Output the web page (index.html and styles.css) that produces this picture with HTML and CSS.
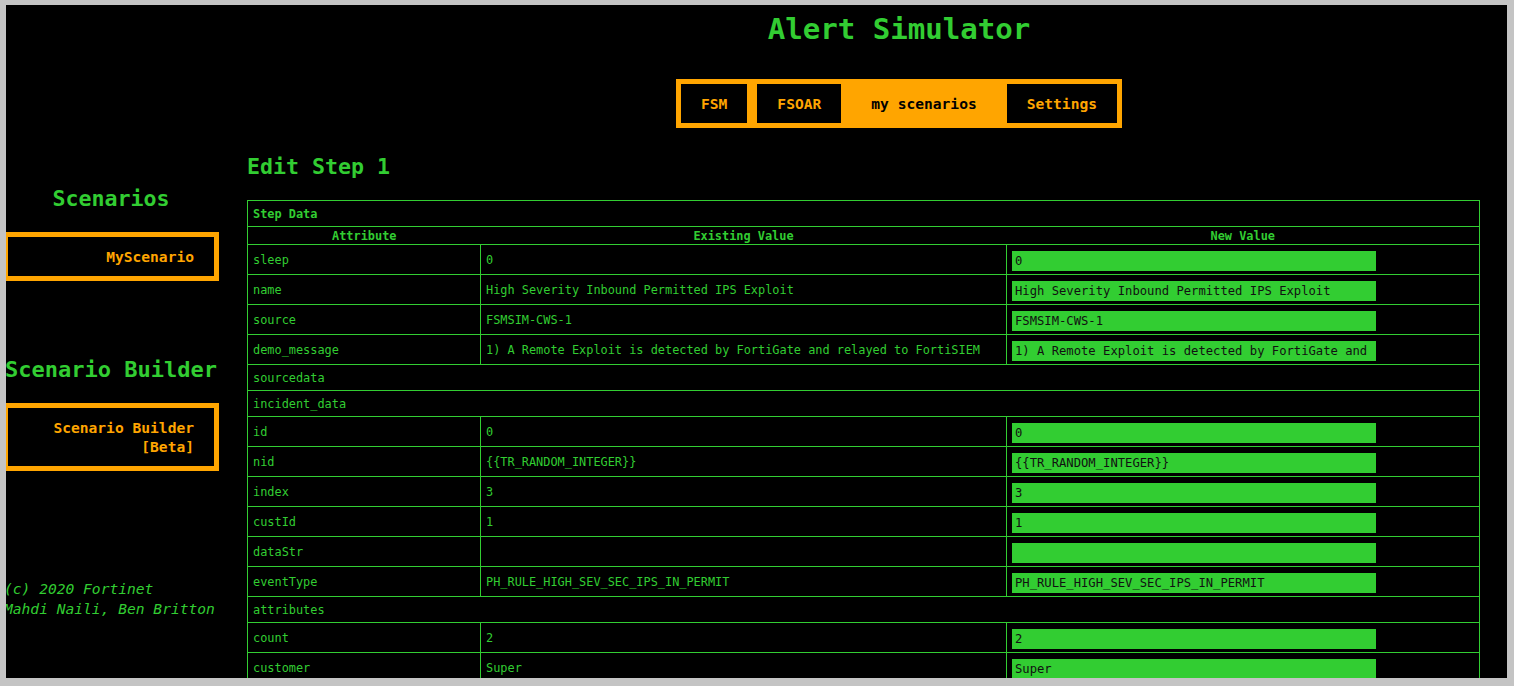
FILE: index.html
```html
<!DOCTYPE html>
<html lang="en">
<head>
<meta charset="utf-8">
<title>Alert Simulator</title>
<link rel="stylesheet" href="styles.css">
</head>
<body>
<div class="screen">
  <header class="top">
    <h1 class="title">Alert Simulator</h1>
    <nav class="nav">
      <a class="nav-item" href="#">FSM</a>
      <a class="nav-item" href="#">FSOAR</a>
      <a class="nav-item active" href="#">my scenarios</a>
      <a class="nav-item" href="#">Settings</a>
    </nav>
  </header>
  <div class="layout">
    <aside class="side">
      <h2 class="side-title">Scenarios</h2>
      <a class="side-box" href="#">MyScenario</a>
      <h2 class="side-title builder">Scenario Builder</h2>
      <a class="side-box box2" href="#">Scenario Builder<br>[Beta]</a>
      <footer class="credits">(c) 2020 Fortinet<br>Mahdi Naili, Ben Britton</footer>
    </aside>
    <main class="main">
      <h2 class="page-title">Edit Step 1</h2>
      <table class="grid">
        <colgroup>
          <col class="c1">
          <col class="c2">
          <col class="c3">
        </colgroup>
        <tr><td class="caption" colspan="3">Step Data</td></tr>
        <tr class="head"><th>Attribute</th><th>Existing Value</th><th>New Value</th></tr>
        <tr><td>sleep</td><td>0</td><td class="in"><input class="field" type="text" value="0"></td></tr>
        <tr><td>name</td><td>High Severity Inbound Permitted IPS Exploit</td><td class="in"><input class="field" type="text" value="High Severity Inbound Permitted IPS Exploit"></td></tr>
        <tr><td>source</td><td>FSMSIM-CWS-1</td><td class="in"><input class="field" type="text" value="FSMSIM-CWS-1"></td></tr>
        <tr><td>demo_message</td><td>1) A Remote Exploit is detected by FortiGate and relayed to FortiSIEM</td><td class="in"><input class="field" type="text" value="1) A Remote Exploit is detected by FortiGate and relayed to FortiSIEM"></td></tr>
        <tr><td colspan="3">sourcedata</td></tr>
        <tr><td colspan="3">incident_data</td></tr>
        <tr><td>id</td><td>0</td><td class="in"><input class="field" type="text" value="0"></td></tr>
        <tr><td>nid</td><td>{{TR_RANDOM_INTEGER}}</td><td class="in"><input class="field" type="text" value="{{TR_RANDOM_INTEGER}}"></td></tr>
        <tr><td>index</td><td>3</td><td class="in"><input class="field" type="text" value="3"></td></tr>
        <tr><td>custId</td><td>1</td><td class="in"><input class="field" type="text" value="1"></td></tr>
        <tr><td>dataStr</td><td></td><td class="in"><input class="field" type="text" value=""></td></tr>
        <tr><td>eventType</td><td>PH_RULE_HIGH_SEV_SEC_IPS_IN_PERMIT</td><td class="in"><input class="field" type="text" value="PH_RULE_HIGH_SEV_SEC_IPS_IN_PERMIT"></td></tr>
        <tr><td colspan="3">attributes</td></tr>
        <tr><td>count</td><td>2</td><td class="in"><input class="field" type="text" value="2"></td></tr>
        <tr><td>customer</td><td>Super</td><td class="in"><input class="field" type="text" value="Super"></td></tr>
      </table>
    </main>
  </div>
</div>
</body>
</html>
```
FILE: styles.css
```css
html, body {
  margin: 0;
  height: 100%;
  overflow: hidden;
  background: #c4c4c4;
}

body {
  font-family: "DejaVu Sans Mono", "Liberation Mono", monospace;
  color: #32cd32;
}

.screen {
  margin: 5px 7px 0 6px;
  height: 673px;
  background: #000;
  overflow: hidden;
}

.top {
  padding: 6px 0 0 285px;
  display: flex;
  flex-direction: column;
  align-items: center;
}

.title {
  margin: 0;
  font-size: 29.1px;
  line-height: 36px;
  font-weight: bold;
  color: #32cd32;
}

.nav {
  margin-top: 32px;
  display: flex;
}

.nav-item {
  display: block;
  border: 5px solid #ffa500;
  padding: 0 20px;
  line-height: 39px;
  font-size: 14.6px;
  font-weight: bold;
  color: #ffa500;
  text-decoration: none;
  background: #000;
}

.nav-item.active {
  background: #ffa500;
  color: #000;
}

.layout {
  display: flex;
  margin-left: -3px;
}

.side {
  width: 216px;
  flex: none;
  display: flex;
  flex-direction: column;
}

.side-title {
  margin: 57px 0 0;
  font-size: 21.6px;
  line-height: 28px;
  font-weight: bold;
  text-align: center;
  white-space: nowrap;
  color: #32cd32;
}

.side-title.builder {
  margin-top: 75px;
  font-size: 22px;
}

.side-box {
  display: block;
  margin-top: 19px;
  border: 5px solid #ffa500;
  padding: 10px 20px;
  font-size: 14.6px;
  line-height: 19px;
  font-weight: bold;
  color: #ffa500;
  text-align: right;
  text-decoration: none;
}

.side-box.box2 {
  margin-top: 19px;
}

.credits {
  margin-top: 108px;
  padding-left: 1px;
  font-size: 14.6px;
  line-height: 20px;
  font-style: italic;
  white-space: nowrap;
  color: #32cd32;
}

.main {
  margin-left: 28px;
  flex: none;
}

.page-title {
  margin: 25px 0 0;
  font-size: 21.6px;
  line-height: 28px;
  font-weight: bold;
  color: #32cd32;
}

.grid {
  margin-top: 19px;
  border-collapse: collapse;
  table-layout: fixed;
  width: 1232px;
  border: 1px solid #32cd32;
  font-size: 11.9px;
  line-height: 15px;
  color: #32cd32;
}

.c1 { width: 233px; }
.c2 { width: 526px; }
.c3 { width: 473px; }

.grid td,
.grid th {
  border: 1px solid #32cd32;
  padding: 6px 5px 4px;
  text-align: left;
  vertical-align: middle;
  white-space: nowrap;
  overflow: hidden;
}

.grid td.caption {
  font-weight: bold;
}

.grid .head th {
  border-left: none;
  border-right: none;
  padding: 2px 5px 0;
  text-align: center;
  font-weight: bold;
}

.grid td.in {
  padding: 6px 5px 3px;
}

.field {
  display: block;
  box-sizing: border-box;
  width: 364px;
  height: 20px;
  margin: 0;
  border: none;
  padding: 0 3px;
  background: #32cd32;
  color: #111;
  font-family: "DejaVu Sans Mono", "Liberation Mono", monospace;
  font-size: 12.2px;
  outline: none;
}
```
